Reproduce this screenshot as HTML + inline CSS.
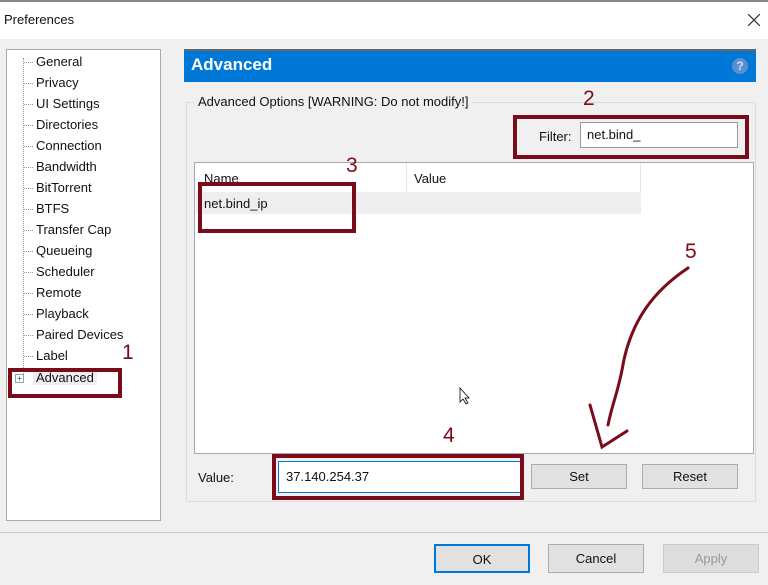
<!DOCTYPE html>
<html><head><style>
body{margin:0;width:768px;height:585px;background:#f0f0f0;font-family:"Liberation Sans",sans-serif;font-size:13px;color:#111;position:relative;overflow:hidden}
.a{position:absolute}
.tree div{position:absolute;left:36px;font-size:13px;white-space:nowrap}
.tree span{position:absolute;left:-12px;top:8px;width:9px;border-top:1px dotted #999}
.btn{position:absolute;background:#e1e1e1;border:1px solid #adadad;text-align:center;box-sizing:border-box}
.red{position:absolute;border:4px solid #7b0a1a;box-sizing:border-box}
.num{position:absolute;color:#7b0a1a;font-size:21px}
</style></head><body>
<div class="a" style="left:0;top:0;width:768px;height:2px;background:#888"></div>
<div class="a" style="left:0;top:2px;width:768px;height:37px;background:#fff"></div>
<div class="a" style="left:4px;top:12px;font-size:13px">Preferences</div>
<svg class="a" style="left:748px;top:14px" width="12" height="12"><path d="M0 0L12 12M12 0L0 12" stroke="#333" stroke-width="1.2"/></svg>
<div class="a" style="left:6px;top:49px;width:155px;height:472px;background:#fff;border:1px solid #aaa;box-sizing:border-box"></div>
<div class="a" style="left:23px;top:58px;height:318px;border-left:1px dotted #999"></div>
<div class="tree a" style="left:0;top:54px">
<div style="top:0"><span></span>General</div>
<div style="top:21px"><span></span>Privacy</div>
<div style="top:42px"><span></span>UI Settings</div>
<div style="top:63px"><span></span>Directories</div>
<div style="top:84px"><span></span>Connection</div>
<div style="top:105px"><span></span>Bandwidth</div>
<div style="top:126px"><span></span>BitTorrent</div>
<div style="top:147px"><span></span>BTFS</div>
<div style="top:168px"><span></span>Transfer Cap</div>
<div style="top:189px"><span></span>Queueing</div>
<div style="top:210px"><span></span>Scheduler</div>
<div style="top:231px"><span></span>Remote</div>
<div style="top:252px"><span></span>Playback</div>
<div style="top:273px"><span></span>Paired Devices</div>
<div style="top:294px"><span></span>Label</div>
<div style="top:316px;background:#eee;padding:0 3px;left:33px">Advanced</div>
</div>
<div class="a" style="left:15px;top:374px;width:7px;height:7px;border:1px solid #8aa;font-size:8px;line-height:7px;text-align:center;color:#336">+</div>
<div class="a" style="left:184px;top:49px;width:572px;height:33px;background:#0078d7;border-top:2px solid #666;box-sizing:border-box"></div>
<div class="a" style="left:191px;top:55px;color:#fff;font-weight:bold;font-size:17px">Advanced</div>
<div class="a" style="left:732px;top:58px;width:16px;height:16px;border-radius:50%;background:#5b8fcf;color:#dde;font-size:12px;font-weight:bold;text-align:center;line-height:16px">?</div>
<div class="a" style="left:186px;top:102px;width:570px;height:400px;border:1px solid #ddd;box-sizing:border-box"></div>
<div class="a" style="left:194px;top:94px;background:#f0f0f0;padding:0 4px">Advanced Options [WARNING: Do not modify!]</div>
<div class="a" style="left:539px;top:129px">Filter:</div>
<div class="a" style="left:580px;top:122px;width:158px;height:26px;background:#fff;border:1px solid #999;box-sizing:border-box;padding:4px 6px">net.bind_</div>
<div class="a" style="left:194px;top:162px;width:560px;height:292px;background:#fff;border:1px solid #aaa;box-sizing:border-box"></div>
<div class="a" style="left:406px;top:163px;width:1px;height:29px;background:#e5e5e5"></div>
<div class="a" style="left:640px;top:163px;width:1px;height:29px;background:#e5e5e5"></div>
<div class="a" style="left:204px;top:171px">Name</div>
<div class="a" style="left:414px;top:171px">Value</div>
<div class="a" style="left:196px;top:192px;width:445px;height:22px;background:#eee"></div>
<div class="a" style="left:204px;top:196px">net.bind_ip</div>
<div class="a" style="left:198px;top:470px">Value:</div>
<div class="a" style="left:278px;top:461px;width:243px;height:32px;background:#fff;border:1px solid #0078d7;box-sizing:border-box;padding:7px 7px">37.140.254.37</div>
<div class="btn" style="left:531px;top:464px;width:96px;height:25px;line-height:23px">Set</div>
<div class="btn" style="left:642px;top:464px;width:96px;height:25px;line-height:23px">Reset</div>
<div class="a" style="left:0;top:532px;width:768px;height:1px;background:#ccc"></div>
<div class="btn" style="left:434px;top:544px;width:96px;height:29px;line-height:27px;border:2px solid #0078d7">OK</div>
<div class="btn" style="left:548px;top:544px;width:96px;height:29px;line-height:27px">Cancel</div>
<div class="btn" style="left:663px;top:544px;width:96px;height:29px;line-height:27px;color:#999;background:#ddd;border-color:#ccc">Apply</div>
<div class="red" style="left:8px;top:368px;width:114px;height:30px"></div>
<div class="red" style="left:513px;top:115px;width:236px;height:44px"></div>
<div class="red" style="left:198px;top:182px;width:158px;height:51px"></div>
<div class="red" style="left:272px;top:454px;width:252px;height:46px"></div>
<div class="num" style="left:122px;top:341px">1</div>
<div class="num" style="left:583px;top:87px">2</div>
<div class="num" style="left:346px;top:154px">3</div>
<div class="num" style="left:443px;top:424px">4</div>
<div class="num" style="left:685px;top:240px">5</div>
<svg class="a" style="left:0;top:0" width="768" height="585"><g fill="none" stroke="#7b0a1a" stroke-width="3" stroke-linecap="round">
<path d="M688 268 C655 290 630 320 622 370 C617 395 612 405 608 425"/>
<path d="M590 405 L602 447 L627 431"/></g>
<path d="M460 388 L460 402 L463 399 L466 404 L468 403 L465 398 L469 398 Z" fill="#fff" stroke="#000" stroke-width="0.8"/></svg>
</body></html>
